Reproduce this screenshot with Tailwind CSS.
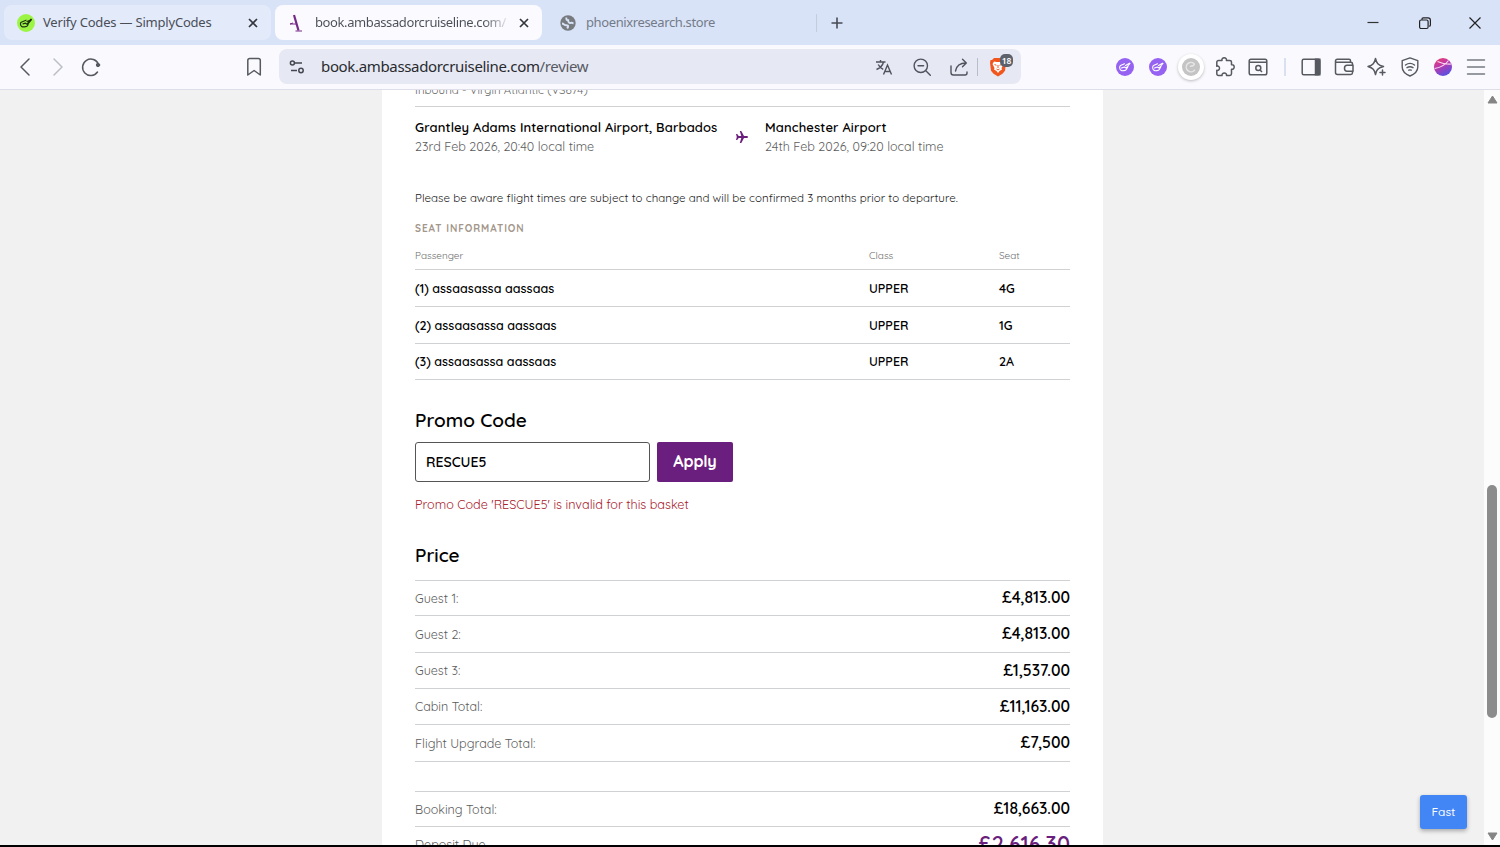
<!DOCTYPE html>
<html lang="en">
<head>
    <meta charset="UTF-8">
    <meta name="viewport" content="width=device-width, initial-scale=1.0">
    <title>book.ambassadorcruiseline.com/review</title>
    <script src="https://cdn.jsdelivr.net/npm/@tailwindcss/browser@4"></script>
</head>
<body class="h-[847px] w-[1500px] overflow-hidden bg-black flex flex-col font-['Quicksand','Lato',sans-serif] text-black">

    <!-- Tab strip -->
    <header class="h-[45px] shrink-0 bg-[#d9e3f8] flex items-center pl-1 font-['Segoe_UI','Noto_Sans',sans-serif] text-[13px] text-[#4a4e57]">
        <div class="w-[267px] h-[35px] rounded-lg bg-[#e3ebfb] flex items-center pl-[13px] pr-3">
            <svg class="w-[18px] h-[18px] shrink-0" viewBox="0 0 18 18" fill="none">
                <circle cx="9" cy="9" r="9" fill="#9cf545"/>
                <path d="M9 6.2 4.2 8.2c-1 .5-1 2.800.2 4 1.300 1.200 5 .8 6.200-.6l1-3.100M6 9.800l2.500-.6 1.500 1 4-5M10 7.500l4.500-2-3.300 4" stroke="#1c3310" stroke-width="1.200" stroke-linecap="round" stroke-linejoin="round"/>
            </svg>
            <span class="ml-2 whitespace-nowrap tracking-[-0.2px]">Verify Codes — SimplyCodes</span>
            <svg class="ml-auto w-3 h-3" viewBox="0 0 12 12" stroke="#33363d" stroke-width="1.700"><path d="M2 2l8 8M10 2l-8 8"/></svg>
        </div>
        <div class="ml-1 w-[267px] h-[35px] rounded-lg bg-[#fbfaff] flex items-center pl-[14px] pr-3">
            <svg class="w-[14px] h-[18px] shrink-0" viewBox="0 0 14 18" fill="none" stroke="#752a86">
                <path d="M5 1l4.500 15.500" stroke-width="2.200"/>
                <path d="M1 10h6.500M6.500 17h6.500" stroke-width="1.200"/>
                <path d="M1 10l3-1" stroke-width="1"/>
            </svg>
            <span class="ml-3 w-[191px] overflow-hidden whitespace-nowrap tracking-[-0.4px] bg-linear-to-r from-[#4a4e57] from-88% to-[#dcdce4] bg-clip-text text-transparent">book.ambassadorcruiseline.com/</span>
            <svg class="ml-auto w-3 h-3 shrink-0" viewBox="0 0 12 12" stroke="#33363d" stroke-width="1.700"><path d="M2 2l8 8M10 2l-8 8"/></svg>
        </div>
        <div class="w-[275px] h-[18px] border-r border-[#c3cde0] flex items-center pl-[18px] text-[#747b88]">
            <svg class="w-4 h-4 shrink-0" viewBox="0 0 16 16" fill="none">
                <circle cx="8" cy="8" r="7.700" fill="#777b80"/>
                <path d="M2 8.500c2 .2 2.200 1.800 4.200 1.800 1.500 0 2.300.3 1.800 1.700l-.8 1.500M6.500 2.500c-.5 2 .2 2.700 1.700 2.700-.2 2.500 1.300 3 3 2.600 1.200-.2 1.800.5 2.300.7" stroke="#d9e3f8" stroke-width="1.900"/>
            </svg>
            <span class="ml-[10px] tracking-[-0.380px]">phoenixresearch.store</span>
        </div>
        <svg class="ml-[13px] w-[14px] h-[14px]" viewBox="0 0 14 14" stroke="#474b54" stroke-width="1.600"><path d="M7 1.500v11M1.500 7h11"/></svg>
        <div class="ml-auto mr-[18px] flex items-center gap-[38px]">
            <svg class="w-[14px] h-[14px]" viewBox="0 0 14 14" stroke="#333" stroke-width="1.200"><path d="M1.500 6.500h11"/></svg>
            <svg class="w-[14px] h-[14px]" viewBox="0 0 14 14" fill="none" stroke="#222" stroke-width="1.200"><rect x="1.600" y="4" width="8.500" height="8.500" rx="1.500"/><path d="M4 3.800V3c0-.8.600-1.200 1.300-1.200H10c1.500 0 2.400 1 2.400 2.400v4.700c0 .8-.5 1.300-1.300 1.300"/></svg>
            <svg class="ml-[-2px] w-[14px] h-[14px]" viewBox="0 0 14 14" stroke="#222" stroke-width="1.200"><path d="M1.500 1.500l11 11M12.500 1.500l-11 11"/></svg>
        </div>
    </header>

    <!-- Toolbar -->
    <nav class="h-[45px] shrink-0 bg-[#faf9fe] border-b border-[#dedee9] flex items-center pb-px pl-[15px] pr-[14px] font-['Segoe_UI','Noto_Sans',sans-serif]">
        <svg class="w-5 h-5" viewBox="0 0 20 20" fill="none" stroke="#565960" stroke-width="1.500" stroke-linecap="round" stroke-linejoin="round"><path d="M14 2l-8 8 8 8"/></svg>
        <svg class="ml-3 w-5 h-5" viewBox="0 0 20 20" fill="none" stroke="#bcbdc5" stroke-width="1.500" stroke-linecap="round" stroke-linejoin="round"><path d="M7 2l8 8-8 8"/></svg>
        <svg class="ml-[14px] w-5 h-5" viewBox="0 0 20 20" fill="none" stroke="#565960" stroke-width="1.500" stroke-linecap="round"><path d="M17.500 7.500A8.200 8.200 0 1 0 16.500 15"/><circle cx="17" cy="8" r="1.700" fill="#565960" stroke-width="1"/></svg>
        <svg class="ml-[143px] w-5 h-5" viewBox="0 0 20 20" fill="none" stroke="#565960" stroke-width="1.500" stroke-linejoin="round"><path d="M3.800 3.500C3.800 2.200 4.600 1.500 5.800 1.500h8.500c1.200 0 2 .7 2 2V18l-6.200-4.500L3.800 18z"/></svg>
        <div class="ml-[15px] w-[742px] h-[35px] rounded-lg bg-[#e6e8f3] flex items-center pl-[10px]">
            <svg class="w-4 h-4" viewBox="0 0 16 16" fill="none" stroke="#44474f" stroke-width="1.500"><circle cx="3.400" cy="4" r="2"/><path d="M6 4h7M2 11.500h6"/><circle cx="12" cy="11.500" r="2.200"/></svg>
            <span class="ml-4 text-[15px] tracking-[-0.340px] text-[#292b30] whitespace-nowrap">book.ambassadorcruiseline.com<span class="text-[#575a63]">/review</span></span>
            <div class="ml-auto mr-[8px] flex items-center">
                <svg class="w-[18px] h-[18px]" viewBox="0 0 18 18" fill="none" stroke="#50535c" stroke-width="1.400"><path d="M1 4h9.500M5.500 2v2M8.500 4c-.8 3.500-3.500 6-7 7.500M3.200 6.500c1 2 2.800 3.700 5 4.800M8.500 16.500l4-9.500 4 9.500M9.800 13.500h5.400"/></svg>
                <svg class="ml-5 w-[18px] h-[18px]" viewBox="0 0 18 18" fill="none" stroke="#50535c" stroke-width="1.400" stroke-linecap="round"><circle cx="7.800" cy="7.800" r="6.700"/><path d="M12.800 12.800l4.500 4.500M5 7.800h5.600"/></svg>
                <svg class="ml-[19px] w-[18px] h-[18px]" viewBox="0 0 18 18" fill="none" stroke="#50535c" stroke-width="1.400" stroke-linecap="round" stroke-linejoin="round"><path d="M1 8v6.500C1 16 1.800 17 3.300 17H15c1.300 0 2-.7 2-2v-1M12.500 1.200l3.800 3.800-3.800 3.800M16 5c-6 0-9.500 2.500-10.500 8"/></svg>
                <div class="ml-[9px] w-px h-[18px] bg-[#b9bcca]"></div>
                <div class="relative ml-[11px] w-[18px] h-5">
                    <svg class="w-[18px] h-5" viewBox="0 0 18 20"><path d="M5 1h8l2 2 1.500-.2.5 3-1 8-2.500 3L9 19.500l-4.500-2.700L2 13.800l-1-8L1.500 3 3 3z" fill="#f1561f"/><path d="M5 4.500l2.500.5h3l2.500-.5 1.500 2.500-2 4 .5 1.500-2.500 1.500L9 16l-1.500-2-2.500-1.500.5-1.500-2-4z" fill="#fff"/><path d="M5.500 7.500l2 .8M12.500 7.500l-2 .8M9 8v3M7.500 12L9 13l1.500-1" stroke="#f1561f" stroke-width="1" fill="none"/></svg>
                    <span class="absolute left-[11px] -top-[3px] w-[13px] h-[13px] rounded-[5px] bg-[#5d616c] text-white text-[8.500px] leading-[13px] text-center font-semibold">18</span>
                </div>
                <div class="w-[6px]"></div>
            </div>
        </div>
        <div class="ml-auto flex items-center">
            <svg class="w-[18px] h-[18px]" viewBox="0 0 18 18" fill="none"><circle cx="9" cy="9" r="9" fill="#9562f2"/><path d="M8.500 5.700L4.500 7.500c-1.500 1-.8 4 .5 4.800 1.500.9 4.500.3 5.500-1L12 8.500M5.500 10l3-1 1.500 1 4-4.500M9.500 7.500l4-2.300" stroke="#fff" stroke-width="1.100" stroke-linecap="round" stroke-linejoin="round"/></svg>
            <svg class="ml-[15px] w-[18px] h-[18px]" viewBox="0 0 18 18" fill="none"><circle cx="9" cy="9" r="9" fill="#9562f2"/><path d="M8.500 5.700L4.500 7.500c-1.500 1-.8 4 .5 4.800 1.500.9 4.500.3 5.500-1L12 8.500M5.500 10l3-1 1.500 1 4-4.500M9.500 7.500l4-2.300" stroke="#fff" stroke-width="1.100" stroke-linecap="round" stroke-linejoin="round"/></svg>
            <div class="ml-[11px] w-[26px] h-[26px] rounded-full bg-white shadow-[0_1px_3px_rgba(0,0,0,0.25)] flex items-center justify-center">
                <svg class="w-[18px] h-[18px]" viewBox="0 0 18 18" fill="none"><circle cx="9" cy="9" r="9" fill="#c4c4c4"/><path d="M12.500 12.200A4.700 4.700 0 1 1 12 5.500c1 1.500-1 2.500-3.500 2.700" stroke="#e6e6e6" stroke-width="1.500" stroke-linecap="round"/></svg>
            </div>
            <svg class="ml-[11px] w-5 h-5" viewBox="0 0 20 20" fill="none" stroke="#565960" stroke-width="1.500" stroke-linejoin="round"><path d="M3.500 3.500H7C6.500 1.800 7.800.8 9.200.8s2.700 1 2.200 2.700h3.400c1 0 1.700.7 1.700 1.700v2.600c1.500-.5 2.700.7 2.700 2.200s-1.200 2.700-2.700 2.200v4.600c0 1-.7 1.700-1.700 1.700h-3.300c.5-1.500-.8-2.500-2.200-2.500s-2.700 1-2.200 2.500H3.500c-1 0-1.700-.7-1.700-1.700v-3.500c1.700.4 2.700-.7 2.700-2.100s-1-2.500-2.700-2V5.200c0-1 .7-1.700 1.700-1.700z"/></svg>
            <svg class="ml-[13px] w-5 h-5" viewBox="0 0 20 20" fill="none" stroke="#565960" stroke-width="1.500"><rect x="1.200" y="2.200" width="17.600" height="15.600" rx="1.800"/><path d="M1.200 5.200h17.600M12 13l2 2" /><circle cx="10.300" cy="11" r="2.500"/></svg>
            <div class="ml-4 w-[2px] h-[18px] bg-[#d9e0f0]"></div>
            <svg class="ml-[15px] w-5 h-5" viewBox="0 0 20 20" fill="none" stroke="#565960" stroke-width="1.500"><rect x="1.200" y="2.200" width="17.600" height="15.600" rx="1.500"/><path d="M14.500 2.200h4.300v15.600h-4.300z" fill="#565960"/></svg>
            <svg class="ml-[13px] w-5 h-5" viewBox="0 0 20 20" fill="none" stroke="#565960" stroke-width="1.500" stroke-linejoin="round"><path d="M18.500 8V6.800c0-1-.6-1.600-1.600-1.600H1.500M1.500 4v11.500c0 1.300.8 2 2 2h13.300c1 0 1.700-.7 1.700-1.700v-1.500M1.500 4c0-1 .8-1.700 1.800-1.700H15c1 0 1.500.5 1.500 1.500v1.400"/><path d="M19 8.300h-6c-1.600 0-2.500 1.400-2.500 3s.9 3 2.500 3h6z"/></svg>
            <svg class="ml-[13px] w-5 h-5" viewBox="0 0 20 20" fill="none" stroke="#565960" stroke-width="1.500" stroke-linecap="round" stroke-linejoin="round"><path d="M8.500 1.500c1 4.800 2.500 6.500 8 8-3 .8-5 1.700-6 3-1 1.200-1.500 2.800-2 5-1-4.800-2.500-6.500-7.500-8 5-1.500 6.500-3.200 7.500-8zM15.500 13v5M13 15.500h5"/></svg>
            <svg class="ml-[13px] w-5 h-5" viewBox="0 0 20 20" fill="none" stroke="#565960" stroke-width="1.400" stroke-linecap="round" stroke-linejoin="round"><path d="M10 .9l7.800 2.800v6.300c0 4-3.500 7.200-7.800 9-4.300-1.800-7.800-5-7.800-9V3.700z"/><path d="M5.500 8c2.800-2 6.200-2 9 0M7 10.700c2-1.300 4-1.300 6 0M8.800 13.200c.8-.4 1.600-.4 2.400 0"/></svg>
            <svg class="ml-[14px] w-[18px] h-[18px]" viewBox="0 0 18 18" fill="none">
                <defs><linearGradient id="orb" x1="0" y1="0" x2=".5" y2="1"><stop offset="0" stop-color="#ef4060"/><stop offset=".45" stop-color="#c138a8"/><stop offset="1" stop-color="#5d4fe0"/></linearGradient></defs>
                <circle cx="9" cy="9" r="9" fill="url(#orb)"/><path d="M.8 10.500C6 9.500 11 7.500 14.500 2.500M3.500 3.500C8 5.500 12 6.500 17.500 6" stroke="#fbd9ef" stroke-width="1.100"/>
            </svg>
            <svg class="ml-[14px] w-5 h-5" viewBox="0 0 20 20" stroke="#777a82" stroke-width="1.500" stroke-linecap="round"><path d="M1.500 3h17M1.500 10h17M1.500 17h17"/></svg>
        </div>
    </nav>

    <!-- Page -->
    <div class="relative h-[755px] shrink-0 overflow-hidden bg-[#f1f1f1] flex">
        <main class="ml-[382px] w-[721px] bg-white px-[33px]">
            <div class="h-[17px] border-b border-[#cfd1d2] overflow-hidden">
                <p class="-mt-2 text-[11.500px] leading-4 text-[#666] tracking-[0.040px]">Inbound - Virgin Atlantic (VS674)</p>
            </div>

            <!-- Flight -->
            <div class="h-[82px] pt-[11px] flex text-[13px] leading-[19px]">
                <div class="w-[321px]">
                    <p class="font-semibold tracking-[0.110px]">Grantley Adams International Airport, Barbados</p>
                    <p class="text-[12.500px] text-[#5c5c5c] tracking-[0.040px]">23rd Feb 2026, 20:40 local time</p>
                </div>
                <svg class="mt-[13px] w-3 h-3" viewBox="0 0 12 12" fill="#6b1f7c"><path d="M0 3h1.200L2.700 5h2.600L3.800 0h1.500L8 5h2.700c1.700 0 1.700 2 0 2H8l-2.700 5H3.800l1.500-5H2.700L1.200 9H0l.8-3z"/></svg>
                <div class="ml-[17px]">
                    <p class="font-semibold tracking-[0.120px]">Manchester Airport</p>
                    <p class="text-[12.500px] text-[#5c5c5c] tracking-[0.040px]">24th Feb 2026, 09:20 local time</p>
                </div>
            </div>
            <p class="text-[11.500px] leading-[18px] text-[#222] tracking-[0.040px]">Please be aware flight times are subject to change and will be confirmed 3 months prior to departure.</p>

            <!-- Seats -->
            <h3 class="mt-[13px] text-[10px] leading-[18px] font-bold tracking-[0.930px] text-[#a3968a]">SEAT INFORMATION</h3>
            <div class="h-[32px] border-b border-[#cfd1d2] grid grid-cols-[454px_130px_1fr] pt-[9px] text-[10px] leading-[18px] text-[#6d6d6d]">
                <span>Passenger</span><span>Class</span><span>Seat</span>
            </div>
            <div class="h-[37px] border-b border-[#cfd1d2] grid grid-cols-[454px_130px_1fr] items-center text-[12.500px] font-semibold">
                <span>(1) assaasassa aassaas</span><span>UPPER</span><span>4G</span>
            </div>
            <div class="h-[37px] border-b border-[#cfd1d2] grid grid-cols-[454px_130px_1fr] items-center text-[12.500px] font-semibold">
                <span>(2) assaasassa aassaas</span><span>UPPER</span><span>1G</span>
            </div>
            <div class="h-[36px] border-b border-[#cfd1d2] grid grid-cols-[454px_130px_1fr] items-center text-[12.500px] font-semibold">
                <span>(3) assaasassa aassaas</span><span>UPPER</span><span>2A</span>
            </div>

            <!-- Promo -->
            <h2 class="mt-[26px] text-[19px] leading-7 font-semibold">Promo Code</h2>
            <div class="mt-2 flex gap-[7px]">
                <div class="w-[235px] h-10 border border-[#555] rounded-[3px] flex items-center pl-[10px] text-[14px] font-semibold">RESCUE5</div>
                <button class="w-[76px] h-10 rounded-[2px] bg-[#6a1e7d] pb-[3px] text-[16px] font-bold tracking-[-0.1px] text-white">Apply</button>
            </div>
            <p class="mt-[13px] text-[12.600px] leading-[18px] text-[#a8202c]">Promo Code 'RESCUE5' is invalid for this basket</p>

            <!-- Price -->
            <h2 class="mt-[28px] text-[19px] leading-7 font-semibold">Price</h2>
            <div class="mt-[11px] h-[36px] border-y border-[#cfd1d2] flex items-center justify-between">
                <span class="text-[12.500px] text-[#5c5c5c]">Guest 1:</span><span class="text-[15.700px] font-semibold">£4,813.00</span>
            </div>
            <div class="h-[37px] border-b border-[#cfd1d2] flex items-center justify-between">
                <span class="text-[12.500px] text-[#5c5c5c]">Guest 2:</span><span class="text-[15.700px] font-semibold">£4,813.00</span>
            </div>
            <div class="h-[36px] border-b border-[#cfd1d2] flex items-center justify-between">
                <span class="text-[12.500px] text-[#5c5c5c]">Guest 3:</span><span class="text-[15.700px] font-semibold">£1,537.00</span>
            </div>
            <div class="h-[36px] border-b border-[#cfd1d2] flex items-center justify-between">
                <span class="text-[12.500px] text-[#5c5c5c]">Cabin Total:</span><span class="text-[15.700px] font-semibold">£11,163.00</span>
            </div>
            <div class="h-[37px] border-b border-[#cfd1d2] flex items-center justify-between">
                <span class="text-[12.500px] text-[#5c5c5c]">Flight Upgrade Total:</span><span class="text-[15.700px] font-semibold">£7,500</span>
            </div>
            <div class="mt-[29px] h-[36px] border-y border-[#cfd1d2] flex items-center justify-between">
                <span class="text-[12.500px] text-[#5c5c5c]">Booking Total:</span><span class="text-[15.700px] font-semibold">£18,663.00</span>
            </div>
            <div class="h-[34px] flex items-center justify-between">
                <span class="text-[12.500px] text-[#5c5c5c]">Deposit Due</span><span class="text-[21.500px] font-semibold text-[#6a1e7d]">£2,616.30</span>
            </div>
        </main>

        <!-- Scrollbar -->
        <div class="ml-auto w-4 bg-[#fcfcfc] flex flex-col items-center pt-[5px] pb-[4px]">
            <svg class="w-[11px] h-[9px] shrink-0" viewBox="0 0 11 9" fill="#858585" stroke="#858585" stroke-linejoin="round"><path d="M5.500 1l4.500 7H1z"/></svg>
            <div class="mt-[381px] w-[10px] h-[233px] shrink-0 rounded-full bg-[#8c8c8c]"></div>
            <svg class="mt-auto w-[11px] h-[9px] shrink-0" viewBox="0 0 11 9" fill="#858585" stroke="#858585" stroke-linejoin="round"><path d="M5.500 8L10 1H1z"/></svg>
        </div>

        <button class="absolute left-[1420px] top-[705px] w-[47px] h-[34px] rounded-[3px] bg-[#4285f4] shadow-[0_2px_4px_rgba(0,0,0,0.3)] text-[12px] font-medium text-white">Fast</button>
    </div>
</body>
</html>
